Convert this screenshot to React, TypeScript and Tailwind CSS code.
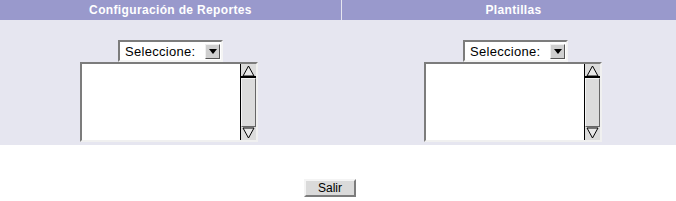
import React from "react";

function ArrowUp() {
  return (
    <svg width="13" height="12" viewBox="0 0 13 12" className="block">
      <polygon points="6.5,1 12,11 1,11" fill="#e8e8e8" stroke="#000" strokeWidth="1" />
    </svg>
  );
}
function ArrowDown() {
  return (
    <svg width="13" height="12" viewBox="0 0 13 12" className="block">
      <polygon points="1,1 12,1 6.5,11" fill="#e8e8e8" stroke="#000" strokeWidth="1" />
    </svg>
  );
}

function SelectBox() {
  return (
    <div className="flex h-[22px] w-[105px] items-center border-2 border-t-[#7c7c7c] border-l-[#7c7c7c] border-b-[#f4f4f4] border-r-[#f4f4f4] bg-white pl-[5px] pr-[1px]">
      <span className="flex-1 text-[13px] leading-none text-black tracking-[0.3px]">Seleccione:</span>
      <div className="flex h-[15px] w-[15px] items-center justify-center border border-t-[#f0f0f0] border-l-[#f0f0f0] border-b-[#555] border-r-[#555] bg-[#cfcfcf]">
        <svg width="8" height="5" viewBox="0 0 8 5" className="block">
          <polygon points="0,0 8,0 4,5" fill="#000" />
        </svg>
      </div>
    </div>
  );
}

function ListBox() {
  return (
    <div className="flex h-[80px] w-[178px] border-2 border-t-[#7c7c7c] border-l-[#7c7c7c] border-b-[#f0f0f0] border-r-[#f0f0f0] bg-white">
      <div className="flex-1" />
      <div className="flex w-[16px] flex-col border-l border-l-black bg-[#c8c8c8]">
        <div className="flex h-[12px] items-start justify-center bg-[#dcdcdc] pt-[1px]">
          <ArrowUp />
        </div>
        <div className="h-[2px] bg-black" />
        <div className="flex-1 border border-t-[#f4f4f4] border-l-[#f4f4f4] border-b-[#666] border-r-[#666] bg-[#dcdcdc]" />
        <div className="flex h-[13px] items-end justify-center bg-[#dcdcdc] pb-[1px]">
          <ArrowDown />
        </div>
      </div>
    </div>
  );
}

export default function App() {
  return (
    <div className="w-[676px] h-[201px] overflow-hidden bg-white" style={{ fontFamily: '"Liberation Sans", Arial, sans-serif' }}>
      <div className="flex h-[20px] bg-[#9999cc]">
        <div className="flex w-[341px] items-center justify-center text-[12px] font-bold tracking-[0.35px] text-white">
          Configuración de Reportes
        </div>
        <div className="w-[1px] bg-[#e6e6f0]" />
        <div className="flex flex-1 items-center justify-center pl-[9px] text-[12px] font-bold tracking-[0.35px] text-white">
          Plantillas
        </div>
      </div>
      <div className="flex h-[125px] bg-[#e6e6f0]">
        <div className="flex w-[342px] flex-col items-start pt-[20px]">
          <div className="ml-[118px]">
            <SelectBox />
          </div>
          <div className="ml-[80px]">
            <ListBox />
          </div>
        </div>
        <div className="flex flex-1 flex-col items-start pt-[20px]">
          <div className="ml-[121px]">
            <SelectBox />
          </div>
          <div className="ml-[82px]">
            <ListBox />
          </div>
        </div>
      </div>
      <div className="flex pt-[34px]">
        <button className="ml-[304px] flex h-[18px] w-[52px] items-center justify-center border-2 border-t-[#f4f4f4] border-l-[#f4f4f4] border-b-[#7c7c7c] border-r-[#7c7c7c] bg-[#dadada] text-[12px] leading-none text-black">
          Salir
        </button>
      </div>
    </div>
  );
}
